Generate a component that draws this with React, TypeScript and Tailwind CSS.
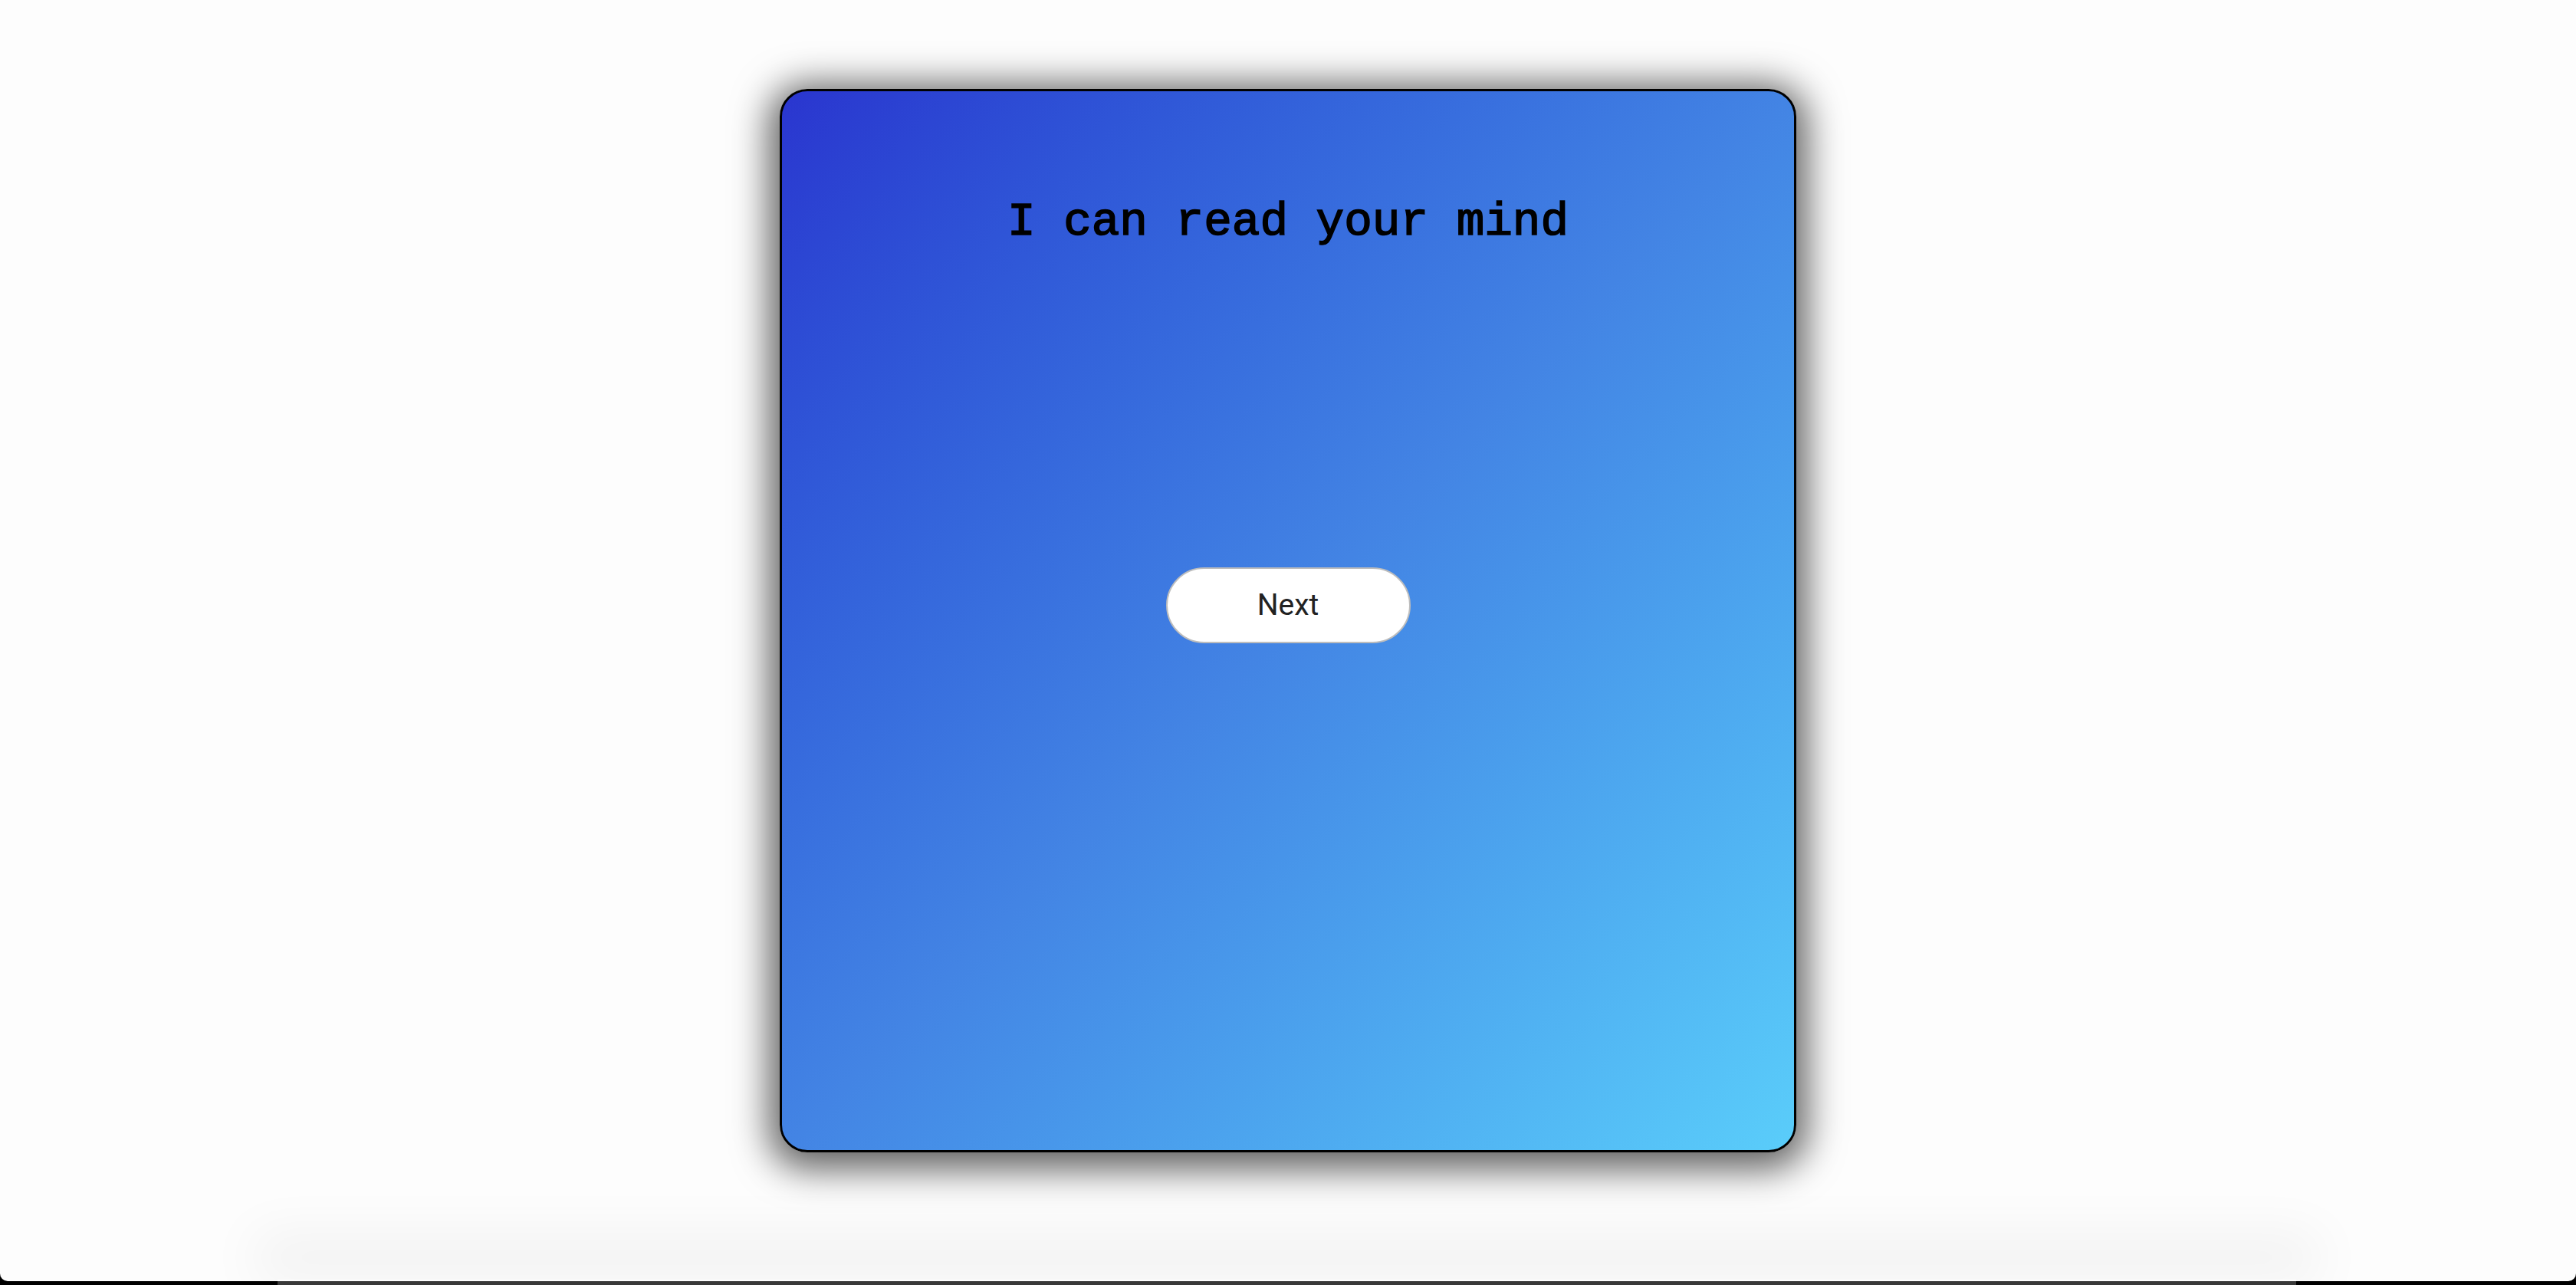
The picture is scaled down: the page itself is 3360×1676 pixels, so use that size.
export default function App() {
  return (
    <div className="h-[1676px] w-full bg-black flex flex-col overflow-hidden">
      {/* page */}
      <div className="h-[1671px] bg-[#fdfdfd] rounded-b-[10px] relative">
        <div className="pt-[116px] flex justify-center">
          <div className="w-[1326px] h-[1387px] rounded-[36px] border-[3px] border-black bg-gradient-to-br from-[#2a35cf] via-[#4384e4] to-[#5acdfa] shadow-[0_8px_48px_14px_rgba(0,0,0,0.62)] flex flex-col items-center">
            <h1 className="mt-[140px] text-[61px] leading-none text-black [-webkit-text-stroke:1.6px_black] font-['Liberation_Mono',monospace]">
              I can read your mind
            </h1>
            <button className="mt-[420px] w-[319px] h-[99px] rounded-full bg-white border-2 border-[#bdbdbd] text-[39px] text-[#222] font-['Roboto',sans-serif]">
              Next
            </button>
          </div>
        </div>
        {/* bottom shadow band */}
        <div className="absolute bottom-0 left-[362px] right-[365px] h-[2px] shadow-[0_-30px_70px_30px_rgba(0,0,0,0.05)]" />
      </div>
      {/* bottom edge */}
      <div className="h-[5px] flex">
        <div className="w-[362px]" />
        <div className="w-[2633px] bg-[#3b3b3b]" />
      </div>
    </div>
  );
}
